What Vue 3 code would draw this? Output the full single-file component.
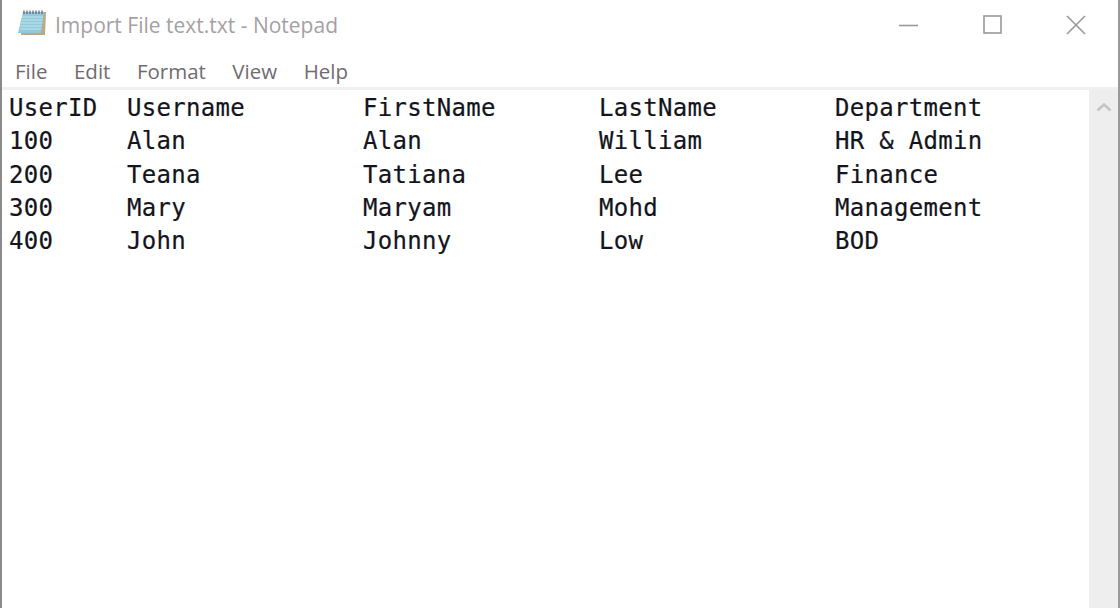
<template>
  <div class="window">
    <div class="titlebar">
      <svg class="app-icon" width="34" height="30" viewBox="0 0 34 30">
        <path d="M8 4 L30 4 L29 27 L5 27 Z" fill="#b9a98a" />
        <path d="M7 4 L28 4 L25 25 L2 25 Z" fill="#8fcbdc" />
        <path d="M6 9 L27 9 M5.5 12 L26.6 12 M5 15 L26.2 15 M4.5 18 L25.8 18 M4 21 L25.4 21" stroke="#c3e4ec" stroke-width="1.2" />
        <path d="M8 2.5 V6 M11 2.5 V6 M14 2.5 V6 M17 2.5 V6 M20 2.5 V6 M23 2.5 V6 M26 2.5 V6" stroke="#667" stroke-width="1.3" />
      </svg>
      <span class="title">Import File text.txt - Notepad</span>
      <div class="controls">
        <svg class="ctrl" width="20" height="20" viewBox="0 0 20 20"><path d="M0 10.5 H19" stroke="#999" stroke-width="1.6" /></svg>
        <svg class="ctrl" width="20" height="20" viewBox="0 0 20 20"><rect x="1" y="1" width="17" height="17" fill="none" stroke="#999" stroke-width="1.6" /></svg>
        <svg class="ctrl" width="20" height="20" viewBox="0 0 20 20"><path d="M1 1 L19 19 M19 1 L1 19" stroke="#999" stroke-width="1.6" /></svg>
      </div>
    </div>
    <div class="menubar">
      <span v-for="item in menu" :key="item" class="menu-item">{{ item }}</span>
    </div>
    <div class="body">
      <div class="editor">
        <div v-for="row in rows" :key="row[0]" class="row">
          <span v-for="(cell, i) in row" :key="i">{{ cell }}</span>
        </div>
      </div>
      <div class="scrollbar">
        <svg width="16" height="10" viewBox="0 0 16 10"><path d="M1.5 8.5 L8 2.5 L14.5 8.5" fill="none" stroke="#c4c4c4" stroke-width="2.4" /></svg>
      </div>
    </div>
  </div>
</template>

<script setup>
const menu = ['File', 'Edit', 'Format', 'View', 'Help']

const rows = [
  ['UserID', 'Username', 'FirstName', 'LastName', 'Department'],
  ['100', 'Alan', 'Alan', 'William', 'HR & Admin'],
  ['200', 'Teana', 'Tatiana', 'Lee', 'Finance'],
  ['300', 'Mary', 'Maryam', 'Mohd', 'Management'],
  ['400', 'John', 'Johnny', 'Low', 'BOD'],
]
</script>

<style>
html, body {
  margin: 0;
  background: #fff;
  overflow: hidden;
}
</style>

<style scoped>
.window {
  width: 1120px;
  height: 608px;
  box-sizing: border-box;
  border-left: 2px solid #8a8a8a;
  border-right: 2px solid #9a9a9a;
  background: #fff;
  display: flex;
  flex-direction: column;
}

.titlebar {
  height: 48px;
  display: flex;
  align-items: center;
  padding-left: 14px;
  flex: none;
}

.app-icon {
  margin-right: 5px;
  margin-top: -3px;
}

.title {
  font-family: "Open Sans", sans-serif;
  font-size: 21px;
  color: #a5a0a5;
  margin-top: 2px;
}

.controls {
  margin-left: auto;
  display: flex;
  gap: 63.5px;
  padding-right: 32px;
  margin-top: 1px;
}

.menubar {
  height: 42px;
  box-sizing: border-box;
  flex: none;
  display: flex;
  align-items: center;
  padding-left: 13px;
  padding-top: 6px;
  gap: 26.5px;
  font-family: "Open Sans", sans-serif;
  font-size: 20.5px;
  color: #6f6b70;
  border-bottom: 3px solid #f0f0f0;
}

.body {
  flex: 1;
  display: flex;
  min-height: 0;
}

.editor {
  flex: 1;
  padding-top: 2px;
  padding-left: 7px;
  font-family: "DejaVu Sans Mono", monospace;
  font-size: 24px;
  letter-spacing: 0.3px;
  color: #14141c;
  -webkit-text-stroke: 0.2px #14141c;
}

.row {
  display: grid;
  grid-template-columns: 118px 236px 236px 236px 1fr;
  height: 33.25px;
  line-height: 33px;
}

.scrollbar {
  width: 29px;
  flex: none;
  background: #eeeeee;
  display: flex;
  justify-content: center;
  align-items: flex-start;
  padding-top: 12px;
  box-sizing: border-box;
}
</style>
